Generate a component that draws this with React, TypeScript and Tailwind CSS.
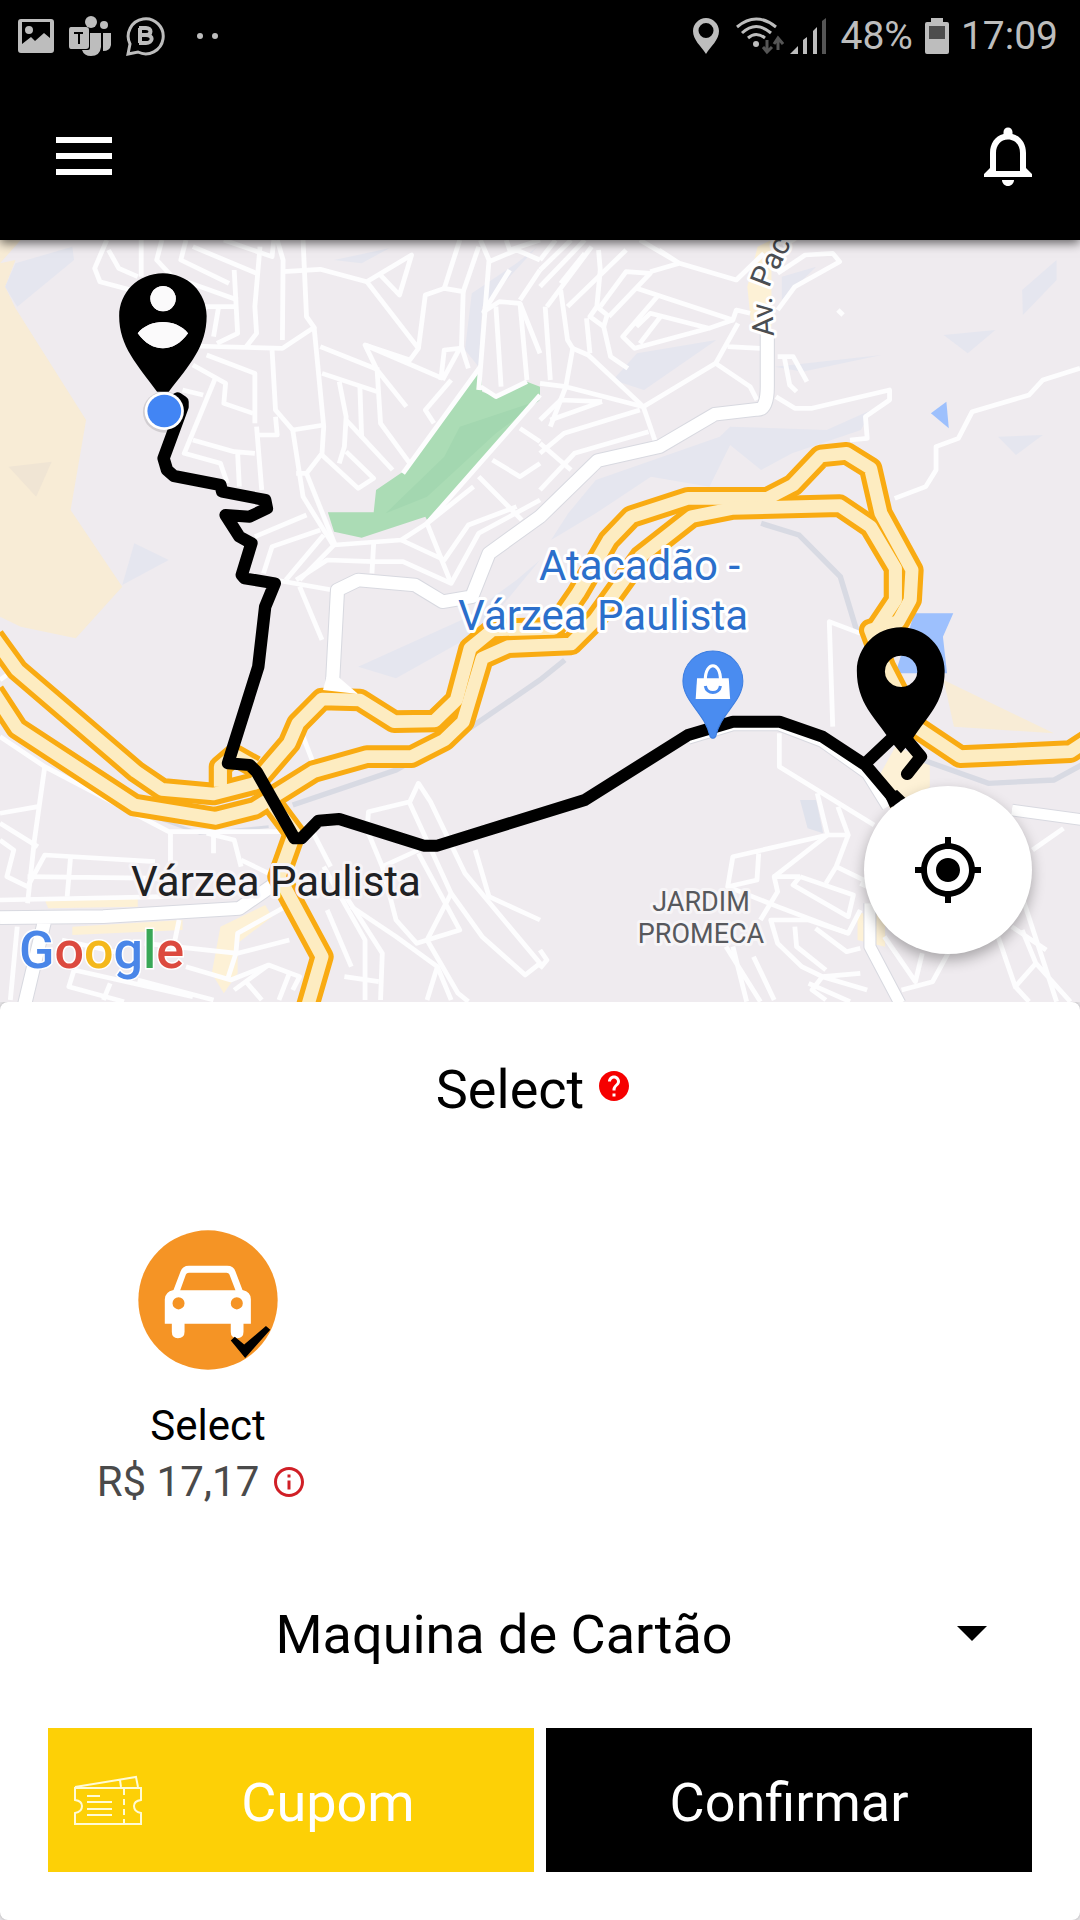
import React from "react";
import { MdArrowDropDown, MdGpsFixed, MdHelp, MdInfoOutline } from "react-icons/md";

/* The map is drawn in four tiles of 1568 x 1140 units each. */
const TILE_X = 1568;
const TILE_Y = 1140;

const STREETS_NW = [
  "M310 0L275 85L290 125L380 150",
  "M315 30L345 85L400 110",
  "M410 0V110",
  "M470 0L455 60L500 110L690 180",
  "M540 0L525 60L665 130",
  "M560 20L745 100M650 0L790 50L795 0",
  "M755 20L740 200L745 280L715 320",
  "M680 90L690 280L630 310",
  "M805 0L822 60L820 300",
  "M880 0L890 230L912 262L820 325L560 318",
  "M822 95L930 88L1065 125L1195 45L1160 165L1100 100",
  "M1065 125L1215 325L1190 360L1060 315L1095 390L1180 500",
  "M1060 315L1285 415",
  "M1285 420L1335 325L1290 330L1280 420",
  "M1215 325L1235 165L1290 145L1345 155L1340 320L1360 385",
  "M1290 145L1335 0M1345 155L1390 20",
  "M1395 0L1420 60L1390 450M1470 0L1480 30L1568 0",
  "M1420 65L1500 30L1568 60M1480 90L1405 215L1450 185L1510 190L1568 340",
  "M1440 200L1455 440M1510 190L1530 420M1510 180L1568 90",
  "M600 345L740 400V550M590 200L690 200M635 200L620 290",
  "M560 375L655 430L650 490L735 520M530 450L590 465",
  "M625 415L535 640L640 670L660 730",
  "M560 600L680 635L740 640M690 640L695 740M745 560L760 750",
  "M790 330L800 510L850 570L880 770L970 920",
  "M750 585H805L800 530",
  "M912 262L940 560L935 640L890 700L860 700",
  "M850 570L940 555M890 700L975 920",
  "M930 320L1100 390M935 400L1095 455M985 425L1005 530L1000 620L985 670",
  "M1045 440L1050 590L1140 690M1095 390L1105 550L1190 670",
  "M935 645L1040 745L1085 715L1005 635M1005 540L1050 590",
  "M1310 420L1235 510L1260 550",
  "M1395 380L1170 700M1395 440L1440 470L1530 425",
  "M1568 465L1240 850L1165 900L970 915L870 1020",
  "M1510 565L1568 605M1430 660L1510 710L1568 670",
  "M1390 710L1515 840M1375 740L1240 850L1310 1030",
  "M740 890L890 825M765 1000L790 920L930 870",
  "M830 1020L940 885M860 1020L950 960L1085 965H1170L1310 1030L1390 880L1568 780",
  "M1085 910L1080 1000M1165 900L1290 960L1360 855L1500 800",
  "M800 1020L965 1050M870 1040L935 1200",
];

const STREETS_NE = [
  "M0 60L45 0M0 90L90 0M0 140L130 0M20 200L150 20",
  "M60 150L80 300L95 325L75 440L30 560M15 200L30 420M0 430L75 440L300 500",
  "M95 325L140 345L300 500L335 605M60 130L130 40",
  "M170 30L175 90L165 200L195 225L185 260L145 230L165 200",
  "M135 235L145 340M185 260L205 350L255 385",
  "M80 200L250 30M200 230L320 100L250 95L175 200",
  "M320 95L405 70L570 120L650 40M345 30L405 70M290 0L405 70",
  "M280 145L560 240L570 210L610 220",
  "M340 170L240 290L275 325L490 265L320 220L280 260M350 230L290 310",
  "M560 240L490 265M575 250L510 370L300 500M545 320L640 325",
  "M510 370L610 440L630 480M0 540L60 480L180 485M30 540L180 485",
  "M0 640L70 580L290 510M0 750L100 640L315 575M0 610L90 690",
  "M690 210L740 140L870 65L850 40L770 45L690 100",
  "M865 210L880 225M690 350L735 350L775 425M710 355L725 435L745 455",
  "M685 470L740 505H790L1015 450V480L945 530L950 595L900 600",
  "M1568 385L1460 420L1420 465L1255 515L1215 595L1150 620V690L1120 740L1030 775",
];

const STREETS_SW = [
  "M0 350L130 440L490 635H830M130 440L100 660L80 850",
  "M0 580L110 560M0 610L110 680M0 660L40 690L20 770L80 800L130 705L450 725",
  "M80 770L480 775M205 710L195 830M495 640V740M600 640L680 660L700 740",
  "M0 840L480 830M0 180L20 165M880 350L910 430",
  "M1065 640L1070 575L1190 545L1215 490L1250 545L1350 760L1568 1030L1525 1065L1400 950L1310 820L1190 550",
  "M1070 640L1110 740L1150 900L1210 970L1335 930L1215 700",
  "M1110 740L1215 690M1240 960L1330 1120L1360 1145M910 640L960 740",
  "M1310 820L1240 960M1380 690L1420 830L1568 900",
  "M940 740L1060 960L1060 1140M980 790L1110 1000L1105 1140",
  "M950 870L1020 1040M1020 860L1150 950L1270 1040L1240 1140M1000 1070L1100 1085",
  "M1270 1040L1310 1140M880 830L690 940L685 1000L660 1080",
  "M215 1050L200 1100L360 1145M215 1050L560 1130M320 1090L300 1140",
  "M400 1080L620 1140M540 1040L670 1080L780 1035L870 1070L850 1110",
  "M710 1080L760 1140M780 1035L680 1110M840 1060L810 1140",
  "M420 970L690 1000L840 960M180 960L350 1000M520 900L500 1000",
  "M50 920L30 1140M620 640V700M700 720L780 760",
];

const STREETS_SE = [
  "M930 40L840 5L850 320M695 340V440L970 615",
  "M805 520L835 645L560 710L545 800L630 780L635 700",
  "M865 560L895 645L835 645L680 770M895 645L860 740L830 790",
  "M755 770L680 770L690 815L640 900M755 770L735 795L895 890L910 825L755 770",
  "M860 740L960 790M545 800L690 860L895 940L930 870",
  "M895 940L780 900L670 900L690 970L760 1040L820 1070L930 1060",
  "M740 920L745 980L830 1050M800 925L890 995L930 985",
  "M540 980L640 1145M560 980L600 1145M620 1010L680 1140M820 1070L790 1110L830 1140",
  "M820 1070L950 1110M780 1090L900 1145M1000 950L1090 1085L1110 1000",
  "M1050 1110L1140 1085L1190 990M1330 950L1380 1100L1440 1030L1400 930",
  "M1380 1100L1420 1145M1440 1030L1540 1145M1400 830L1500 1145M1370 920L1470 990",
  "M1430 690L1520 625M0 990L20 1020L0 1045M930 790L950 800",
];

const ARTERIAL =
  "M2228 280L2228 440C2228 480 2220 508 2200 508L2075 523L1915 620L1735 662L1568 830L1420 940L1370 1070L1285 1085L1205 1035L1040 1020L980 1050L965 1340";
const ARTERIAL_SW = "M0 893L300 890L695 865L800 790M130 900L70 1160";
const ARTERIAL_SE = "M430 355L560 315H695L820 365L950 460L1010 560M958 850V980L1045 1150M1370 570L1580 600";

const HIGHWAYS = [
  "M-20 1190L50 1290L395 1595L470 1648L620 1662L740 1630L840 1510L865 1450L935 1377L1045 1380L1145 1445L1262 1443L1325 1380L1365 1225L1430 1170L1608 1165L1678 1060L1768 900L1833 830L1998 775L2228 775L2303 735L2383 648L2458 640L2528 685L2558 820L2648 990L2643 1080L2608 1145L2528 1170L2568 1280L2658 1460L2788 1550L3108 1535L3160 1500",
  "M-20 1355L50 1465L390 1695L625 1735L740 1705L910 1595L1065 1550L1195 1550L1290 1500L1345 1445L1400 1255L1475 1220L1658 1212L1728 1140L1860 950L2008 830L2128 805L2438 797L2528 860L2600 985L2600 1080L2548 1160",
  "M790 1690L855 1780L810 1910L935 2150L890 2310",
  "M640 1640V1580L680 1545L740 1580",
];

const ROUTE =
  "M515 475L530 485V500L475 655L485 690L505 708L640 735L645 755L770 780L775 805L725 830L655 825L695 890L730 910L702 1005L710 1015L798 1030L770 1100L750 1280L662 1570L725 1575L745 1595L855 1795H875L925 1742L985 1737L1230 1817H1270L1698 1680L1998 1485L2128 1445H2263L2388 1490L2513 1575L2603 1685";

function Streets({ paths, col, row }: { paths: string[]; col: number; row: number }) {
  return (
    <g
      transform={`translate(${col * TILE_X} ${row * TILE_Y})`}
      fill="none"
      stroke="#fdfdfe"
      strokeWidth="14"
      strokeLinejoin="round"
    >
      {paths.map((d) => (
        <path key={d} d={d} />
      ))}
    </g>
  );
}

function MapDrawing() {
  return (
    <svg
      viewBox="0 0 1080 762"
      preserveAspectRatio="xMidYMin slice"
      className="absolute inset-0 h-full w-full"
      role="img"
      aria-label="Mapa de Várzea Paulista"
    >
      <rect width="1080" height="762" fill="#efebef" />
      <g transform="scale(0.34439 0.33333)">
        {/* ground areas */}
        <path
          d="M0 70L60 0H0ZM0 70L0 1130L60 1160L220 1195L355 1040L205 810L250 540L45 205L15 140L45 60Z"
          fill="#f8ecd6"
        />
        <g fill="#e5e6ef">
          <path d="M45 70L210 20L215 60L50 200L15 140Z" />
          <path d="M390 910L490 960L355 1035Z" />
          <path d="M1370 160L1500 70L1560 20L1400 200L1390 380L1350 330Z" />
          <path d="M970 60L1130 25L1050 70Z" />
          <path d="M1780 420L1850 340L2080 300L1870 450Z" />
          <path d="M2270 110L2370 80L2270 180Z" />
          <path d="M2968 150L3068 60V120L2970 225Z" />
          <path d="M2740 285L2890 270L2810 340Z" />
          <path d="M2898 590L3028 585L2950 645Z" />
          <path d="M2250 380L2560 345L2330 395Z" />
          <path d="M1730 720L2090 590L2120 560L2400 570L2530 510L2500 570L2300 640L2210 690L2120 615L2060 740L1890 710L1730 820L1600 900L1650 820Z" />
          <path d="M1040 1280L1340 1140L1500 1020L1568 960L1400 1170L1150 1315Z" />
        </g>
        <path d="M25 680L150 665L105 770Z" fill="#f0e5d4" />
        <path
          d="M1395 375L1400 455L1440 470L1530 425L1568 440V470L1240 840L1235 830L1050 893L970 875L952 817H1085L1092 750L1170 695Z"
          fill="#abdcb5"
        />
        <path d="M1335 560L1568 480L1440 580L1240 770L1120 820L1290 650Z" fill="#a3d7b0" />
        <path d="M2703 520L2748 485L2755 565Z" fill="#9dc0fd" />
        <path d="M2655 1120H2768L2738 1190L2750 1300H2600Z" fill="#9dc0fd" />
        <path d="M2740 1320L3060 1480L2770 1460Z" fill="#f8ecd6" />
        <g fill="#fdf1d6">
          <path d="M130 1980L400 1970V2000L140 2005ZM210 2060L530 2040V2070L210 2085Z" />
          <path d="M640 2060L770 1995L790 2030L690 2110V2200L650 2260L615 2200Z" />
          <path d="M2530 1650L2600 1520L2700 1560V1640L2600 1720ZM2490 2020H2570V2120L2490 2100Z" />
          <path d="M2170 140L2200 20L2240 0V260L2180 240Z" />
        </g>
        <path d="M2323 1680H2370L2390 1780L2345 1765Z" fill="#dfe2ec" />

        {/* railway */}
        <g fill="none" stroke="#d8dae3" strokeWidth="16">
          <path d="M2210 850L2320 885L2440 1010L2490 1180" />
          <path d="M850 1695L1150 1590L1370 1460L1568 1320L1640 1260" />
          <path d="M2680 1560L2870 1630L3060 1620L3150 1570" />
          <path d="M390 1710L580 1780L780 1760" strokeWidth="8" />
        </g>

        <Streets paths={STREETS_NW} col={0} row={0} />
        <Streets paths={STREETS_NE} col={1} row={0} />
        <Streets paths={STREETS_SW} col={0} row={1} />
        <Streets paths={STREETS_SE} col={1} row={1} />

        {/* arterial roads */}
        <g fill="none" strokeLinejoin="round">
          <g stroke="#d8d9e0" strokeWidth="44">
            <path d={ARTERIAL} />
            <path d={ARTERIAL_SW} transform="translate(0 1140)" />
            <path d={ARTERIAL_SE} transform="translate(1568 1140)" strokeWidth="38" />
          </g>
          <g stroke="#ffffff" strokeWidth="38">
            <path d={ARTERIAL} />
            <path d={ARTERIAL_SW} transform="translate(0 1140)" />
            <path d={ARTERIAL_SE} transform="translate(1568 1140)" strokeWidth="32" />
          </g>
        </g>

        {/* highways */}
        <g fill="none" strokeLinejoin="round">
          {HIGHWAYS.map((d) => (
            <path key={d} d={d} stroke="#f9ab12" strokeWidth="68" />
          ))}
          {HIGHWAYS.map((d) => (
            <path key={d} d={d} stroke="#fdecc1" strokeWidth="38" />
          ))}
        </g>
        <path d="M938 1350L948 1310H982L1040 1362Z" fill="#fff" />

        {/* route */}
        <g fill="none" stroke="#000" strokeWidth="36" strokeLinejoin="round" strokeLinecap="round">
          <path d={ROUTE} />
          <path d="M2513 1570L2600 1485L2625 1490L2674 1550L2634 1602" />
        </g>
        <path d="M2568 1665L2605 1650L2630 1675L2585 1704Z" fill="#000" />
      </g>

      {/* map labels */}
      <defs>
        <path id="avenue" d="M774 96L771 44Q774 34 780 26L808 -30" />
      </defs>
      <g
        fontFamily="Roboto, sans-serif"
        fill="#4b4e52"
        stroke="#fff"
        strokeWidth="6"
        strokeLinejoin="round"
        paintOrder="stroke"
      >
        <text fontSize="30">
          <textPath href="#avenue">Av. Paca</textPath>
        </text>
        <g fontSize="42" fill="#2b6fcb" textAnchor="end">
          <text x="740" y="340">Atacadão -</text>
          <text x="748" y="390">Várzea Paulista</text>
        </g>
        <text x="276" y="656" fontSize="42" fill="#202124" stroke="#f7f4f7" textAnchor="middle">
          Várzea Paulista
        </text>
        <g fontSize="27" stroke="#f7f5f7" fill="#57595d" textAnchor="middle">
          <text x="701" y="671">JARDIM</text>
          <text x="701" y="703">PROMECA</text>
        </g>
      </g>
      <text x="19" y="728" fontFamily="Roboto, sans-serif" fontSize="52" fontWeight="500" stroke="#fff" strokeWidth="3" paintOrder="stroke">
        <tspan fill="#4a86e8">G</tspan>
        <tspan fill="#dc4a3f">o</tspan>
        <tspan fill="#f4b81c">o</tspan>
        <tspan fill="#4a86e8">g</tspan>
        <tspan fill="#3aa757">l</tspan>
        <tspan fill="#dc4a3f">e</tspan>
      </text>

      {/* pins */}
      <g transform="scale(0.34439 0.33333)">
        <path
          fillRule="evenodd"
          d="M473 100C545 100 600 158 600 228C600 320 550 375 490 455H456C400 375 346 320 346 228C346 158 401 100 473 100ZM473 138A37 38 0 1 0 474 138ZM400 280C435 235 511 235 546 280C505 340 441 340 400 280Z"
        />
        <path d="M473 138A37 38 0 1 0 474 138ZM400 280C435 235 511 235 546 280C505 340 441 340 400 280Z" fill="#fbfafb" />
        <circle cx="477" cy="516" r="62" fill="#000" opacity="0.12" />
        <circle cx="477" cy="513" r="57" fill="#fff" />
        <circle cx="477" cy="513" r="49" fill="#4285f4" />
        <path
          fillRule="evenodd"
          d="M2616 1162C2688 1162 2743 1222 2743 1292C2743 1390 2690 1430 2648 1500L2616 1540L2584 1500C2540 1430 2488 1390 2488 1292C2488 1222 2544 1162 2616 1162ZM2616 1247A47 47 0 1 0 2617 1247Z"
        />
        <path
          d="M2070 1233C2118 1233 2157 1273 2157 1323C2157 1385 2092 1420 2078 1490Q2070 1500 2062 1490C2048 1420 1983 1385 1983 1323C1983 1273 2022 1233 2070 1233Z"
          fill="#4a8cf0"
          stroke="#3d7ee0"
          strokeWidth="3"
        />
        <path d="M2024 1315H2116L2120 1377H2020Z" fill="#fff" />
        <path d="M2048 1320C2048 1263 2092 1263 2092 1320" fill="none" stroke="#fff" strokeWidth="9" />
        <path d="M2048 1338C2052 1364 2088 1364 2092 1338" fill="none" stroke="#4a8cf0" strokeWidth="9" />
      </g>
    </svg>
  );
}

function StatusBar() {
  return (
    <div className="flex h-[72px] items-center justify-between pr-[22px] pl-[18px] text-[#bdbdbd]">
      <div className="flex items-center gap-[14px]">
        <svg width="36" height="36" viewBox="0 0 36 36" fill="currentColor" aria-label="Imagem">
          <path
            fillRule="evenodd"
            d="M3 1H33Q36 1 36 4V32Q36 35 33 35H3Q0 35 0 32V4Q0 1 3 1ZM4 4V26L13 19L17 23L26 15L32 20V4ZM11 8A4 4 0 1 0 11 16A4 4 0 1 0 11 8Z"
          />
        </svg>
        <svg width="44" height="42" viewBox="0 0 44 42" fill="currentColor" aria-label="Teams">
          <circle cx="23" cy="7" r="6" />
          <circle cx="36" cy="10" r="4" />
          <path d="M22 18H33V32Q32 41 23 41Q16 41 14 35H20Q22 35 22 33Z" />
          <path d="M35 18H43V30Q42 36 35 36Z" />
          <path fillRule="evenodd" d="M3 12H18Q21 12 21 15V31Q21 34 18 34H3Q1 34 1 31V15Q1 12 3 12ZM6 17V19H10V29H12V19H15V17Z" />
        </svg>
        <svg width="40" height="40" viewBox="0 0 40 40" fill="none" stroke="currentColor" aria-label="WhatsApp Business">
          <path d="M4 28A17.5 17.5 0 1 1 12 36L2 38Z" strokeWidth="3" />
          <path d="M14 12V27M13 12H20C26 12 26 19 20 19H14M20 19C28 19 27 27 20 27H13" strokeWidth="4" />
        </svg>
        <svg width="24" height="8" viewBox="0 0 24 8" className="ml-4" fill="currentColor" aria-label="Mais notificações">
          <circle cx="4" cy="4" r="3" />
          <circle cx="19" cy="4" r="3" />
        </svg>
      </div>
      <div className="flex items-center text-[39px] leading-none">
        <svg width="28" height="38" viewBox="0 0 28 38" className="mr-4" fill="currentColor" aria-label="Localização">
          <path
            fillRule="evenodd"
            d="M14 1C21 1 27 7 27 14C27 23 19 29 14 37C9 29 1 23 1 14C1 7 7 1 14 1ZM14 6A7.5 7.5 0 1 0 14 21A7.5 7.5 0 1 0 14 6Z"
          />
        </svg>
        <svg width="48" height="38" viewBox="0 0 48 38" className="mr-[6px]" fill="none" stroke="currentColor" aria-label="Wi-Fi">
          <path d="M1 10Q20 -6 40 10M6 16Q20 3 35 16M12 21Q20 14 29 21" strokeWidth="3" />
          <circle cx="20" cy="27" r="3" fill="currentColor" stroke="none" />
          <path d="M31 23V34M27 30L31 35L36 30M42 33V22M38 27L42 21L47 27" stroke="#555" strokeWidth="3" />
        </svg>
        <svg width="36" height="38" viewBox="0 0 36 38" className="mr-[14px]" fill="currentColor" aria-label="Sinal">
          <path d="M0 37L8 29V37ZM13 37V23L17 20V37ZM23 37V14L27 10V37Z" />
          <path d="M32 37V4L36 1V37Z" fill="#555" />
        </svg>
        <span>48%</span>
        <svg width="24" height="38" viewBox="0 0 24 38" className="mx-3" aria-label="Bateria">
          <path d="M6 1H18V5H22Q24 5 24 7V35Q24 37 22 37H2Q0 37 0 35V7Q0 5 2 5H6Z" fill="currentColor" />
          <path d="M4 9H20V22H4Z" fill="#4d4d4d" />
        </svg>
        <span>17:09</span>
      </div>
    </div>
  );
}

function CarIcon() {
  return (
    <svg viewBox="176 62 418 416" className="h-[140px] w-[140px]" aria-hidden="true">
      <circle cx="385" cy="270" r="208" fill="#f59425" />
      <path
        fillRule="evenodd"
        fill="#fff"
        d="M328 168H442Q462 168 467 185L488 240Q513 245 513 268V341H491V365Q491 384 472 384Q453 384 453 365V341H315V365Q315 384 295 384Q277 384 277 365V341H256V268Q256 246 282 240L303 185Q309 168 328 168ZM328 189Q321 189 319 194L302 241H467L449 194Q447 189 440 189ZM297 262A18 18 0 1 0 297 298A18 18 0 1 0 297 262ZM471 262A18 18 0 1 0 471 298A18 18 0 1 0 471 262Z"
      />
      <path d="M453 391L465 380L493 403L558 348L571 359L496 443Z" />
    </svg>
  );
}

function TicketIcon() {
  return (
    <svg width="68" height="50" viewBox="0 0 68 50" fill="none" stroke="#fffbd6" strokeWidth="2" aria-hidden="true">
      <path d="M1 13H67V25Q60 26 60 31Q60 37 67 38V49H1V38Q8 37 8 31Q8 26 1 25Z" />
      <path d="M1 12L62 2L64 12M46 5L47 12" />
      <path d="M50 14V20M50 24V30M50 34V40M50 44V49" />
      <path d="M13 21H26M13 27H38M13 34H38M13 40H38" />
    </svg>
  );
}

export default function App() {
  return (
    <div className="flex min-h-screen flex-col bg-[#e4e2e5] font-['Roboto',sans-serif] text-black">
      <header className="relative z-10 bg-black text-white shadow-[0_3px_10px_rgba(0,0,0,0.6)]">
        <StatusBar />
        <nav className="flex h-[168px] items-center justify-between pr-9 pl-12">
          <button type="button" aria-label="Menu" className="flex h-18 w-18 items-center justify-center">
            <svg width="56" height="38" viewBox="0 0 56 38" fill="currentColor">
              <path d="M0 0H56V6H0ZM0 16H56V22H0ZM0 32H56V38H0Z" />
            </svg>
          </button>
          <button type="button" aria-label="Notificações">
            <svg width="72" height="72" viewBox="0 0 24 24" fill="currentColor">
              <path d="M12 22c1.1 0 2-.9 2-2h-4c0 1.1.9 2 2 2zm6-6v-5c0-3.07-1.63-5.64-4.5-6.32V4c0-.83-.67-1.5-1.5-1.5s-1.5.67-1.5 1.5v.68C7.64 5.36 6 7.92 6 11v5l-2 2v1h16v-1l-2-2zm-2 1H8v-6c0-2.48 1.51-4.5 4-4.5s4 2.02 4 4.5v6z" />
            </svg>
          </button>
        </nav>
      </header>

      <section className="relative aspect-[1080/762] w-full overflow-hidden">
        <MapDrawing />
        <button
          type="button"
          aria-label="Minha localização"
          className="absolute right-12 bottom-12 flex h-[168px] w-[168px] items-center justify-center rounded-full bg-white shadow-[0_6px_14px_rgba(0,0,0,0.3)]"
        >
          <MdGpsFixed size={72} />
        </button>
      </section>

      <main className="flex-1 rounded-lg bg-white px-12 pt-14 pb-12 shadow-[0_0_3px_rgba(0,0,0,0.25)]">
        <div className="flex items-center justify-center gap-3 pr-3">
          <h1 className="text-[54px] leading-[64px]">Select</h1>
          <button type="button" aria-label="Ajuda" className="pb-2 text-[#f60000]">
            <MdHelp size={36} />
          </button>
        </div>

        <div className="mt-[108px] flex">
          <div className="flex w-[320px] flex-col items-center text-[42px] leading-[56px]">
            <button type="button" aria-pressed="true" className="flex flex-col items-center">
              <CarIcon />
              <span className="mt-7">Select</span>
            </button>
            <div className="flex items-center gap-3 pr-3 text-[#4a4a4a]">
              <span className="whitespace-nowrap">R$ 17,17</span>
              <button type="button" aria-label="Detalhes do preço" className="text-[#d01f26]">
                <MdInfoOutline size={36} />
              </button>
            </div>
          </div>
        </div>

        <div className="relative mt-[74px]">
          <select
            aria-label="Forma de pagamento"
            className="h-24 w-full appearance-none bg-transparent pt-1 pr-[72px] text-center text-[54px] [text-align-last:center]"
          >
            <option>Maquina de Cartão</option>
          </select>
          <MdArrowDropDown size={72} className="pointer-events-none absolute top-3 right-6" />
        </div>

        <div className="mt-12 grid grid-cols-2 gap-3 text-[54px] text-white">
          <button type="button" className="flex h-36 items-center bg-[#fdd006] pr-5 pl-[26px]">
            <TicketIcon />
            <span className="flex-1 pt-1">Cupom</span>
          </button>
          <button type="button" className="h-36 bg-black pt-1">
            Confirmar
          </button>
        </div>
      </main>
    </div>
  );
}
